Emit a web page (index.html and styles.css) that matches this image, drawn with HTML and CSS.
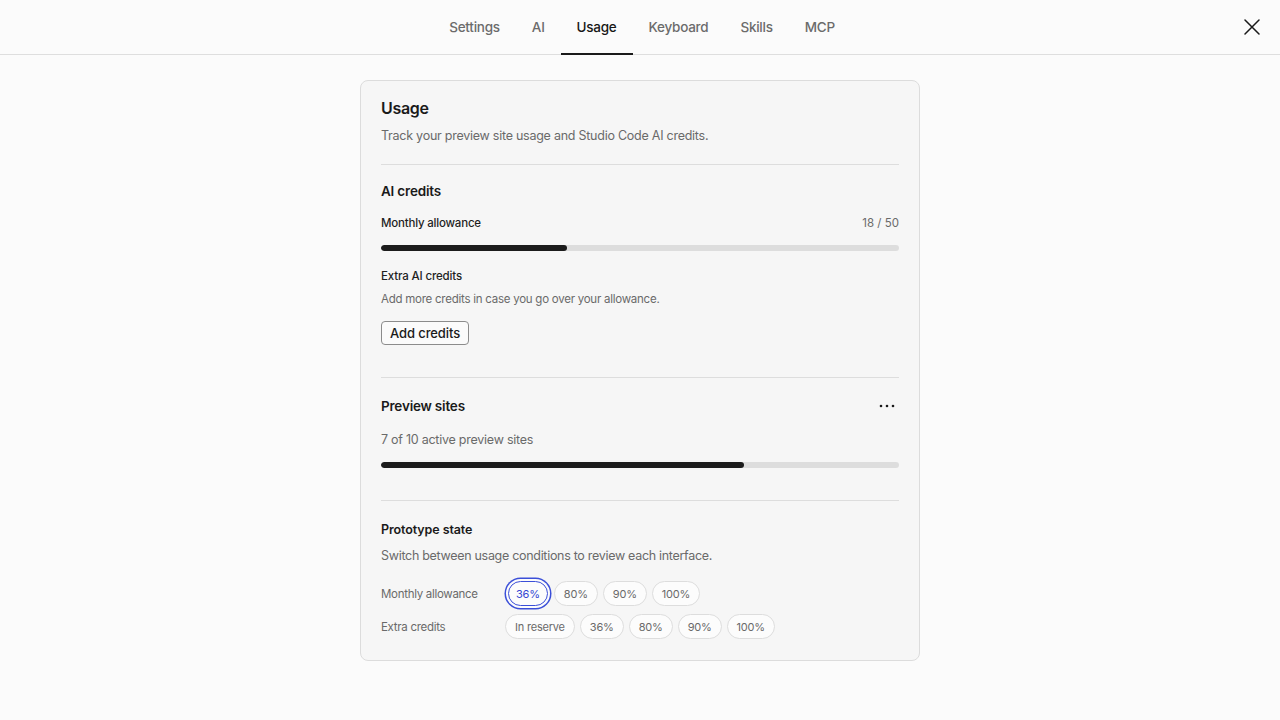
FILE: index.html
```html
<!DOCTYPE html>
<html lang="en">
<head>
<meta charset="utf-8">
<title>Usage</title>
<link rel="stylesheet" href="styles.css">
</head>
<body>
  <header class="topbar">
    <nav class="tabs">
      <a class="tab">Settings</a>
      <a class="tab">AI</a>
      <a class="tab is-active">Usage</a>
      <a class="tab">Keyboard</a>
      <a class="tab">Skills</a>
      <a class="tab">MCP</a>
    </nav>
    <button class="close" aria-label="Close">
      <svg width="16" height="16" viewBox="0 0 16 16"><path d="M1 1L15 15M15 1L1 15" stroke="#1a1a1a" stroke-width="1.5" stroke-linecap="round" fill="none"/></svg>
    </button>
  </header>

  <main class="content">
    <section class="card">
      <div class="card-head">
        <h1 class="card-title">Usage</h1>
        <p class="card-sub">Track your preview site usage and Studio Code AI credits.</p>
      </div>

      <div class="section">
        <h2 class="section-title">AI credits</h2>
        <div class="meter-head">
          <span class="meter-label">Monthly allowance</span>
          <span class="meter-value">18 / 50</span>
        </div>
        <div class="bar"><div class="bar-fill" style="width:36%"></div></div>
        <h3 class="sub-title">Extra AI credits</h3>
        <p class="sub-desc">Add more credits in case you go over your allowance.</p>
        <button class="btn">Add credits</button>
      </div>

      <div class="section">
        <div class="section-head">
          <h2 class="section-title">Preview sites</h2>
          <button class="more" aria-label="More">
            <svg width="16" height="4" viewBox="0 0 16 4"><circle cx="2" cy="2" r="1.3" fill="#1a1a1a"/><circle cx="8" cy="2" r="1.3" fill="#1a1a1a"/><circle cx="14" cy="2" r="1.3" fill="#1a1a1a"/></svg>
          </button>
        </div>
        <p class="count">7 of 10 active preview sites</p>
        <div class="bar"><div class="bar-fill" style="width:70%"></div></div>
      </div>

      <div class="section section-last">
        <h2 class="proto-title">Prototype state</h2>
        <p class="proto-desc">Switch between usage conditions to review each interface.</p>
        <div class="opt-rows">
          <div class="opt-row">
            <span class="opt-label">Monthly allowance</span>
            <div class="chips">
              <button class="chip is-selected">36%</button>
              <button class="chip">80%</button>
              <button class="chip">90%</button>
              <button class="chip">100%</button>
            </div>
          </div>
          <div class="opt-row">
            <span class="opt-label">Extra credits</span>
            <div class="chips">
              <button class="chip">In reserve</button>
              <button class="chip">36%</button>
              <button class="chip">80%</button>
              <button class="chip">90%</button>
              <button class="chip">100%</button>
            </div>
          </div>
        </div>
      </div>
    </section>
  </main>
</body>
</html>
```

FILE: styles.css
```css
* { box-sizing: border-box; }

html, body {
  margin: 0;
  padding: 0;
}

body {
  background: #fbfbfb;
  color: #1a1a1a;
  font-family: Inter, "Noto Sans", "Liberation Sans", sans-serif;
  -webkit-font-smoothing: antialiased;
}

h1, h2, h3, p { margin: 0; }

button {
  font-family: inherit;
  cursor: pointer;
}

/* Top navigation */
.topbar {
  position: relative;
  height: 55px;
  border-bottom: 1px solid #dedede;
  display: flex;
  justify-content: center;
}

.tabs {
  display: flex;
  height: 100%;
  margin-left: 4px;
}

.tab {
  display: flex;
  align-items: center;
  padding: 0 16px;
  font-size: 13.5px;
  font-weight: 500;
  color: #6b6b6b;
  border-bottom: 2px solid transparent;
  margin-bottom: -1px;
  letter-spacing: -0.25px;
}

.tab.is-active {
  color: #161616;
  border-bottom-color: #1a1a1a;
}

.close {
  position: absolute;
  right: 20px;
  top: 19px;
  width: 16px;
  height: 16px;
  padding: 0;
  border: 0;
  background: none;
  display: flex;
}

/* Page body */
.content {
  display: flex;
  justify-content: center;
  padding-top: 25px;
}

.card {
  width: 560px;
  background: #f6f6f6;
  border: 1px solid #dcdcdc;
  border-radius: 8px;
  padding: 17px 20px 21px;
}

.card-head {
  padding-bottom: 19px;
  border-bottom: 1px solid #dddddd;
}

.card-title {
  font-size: 16px;
  line-height: 20px;
  font-weight: 600;
  letter-spacing: -0.3px;
}

.card-sub {
  margin-top: 9px;
  font-size: 12.5px;
  line-height: 18px;
  color: #6a6a6a;
  letter-spacing: -0.25px;
}

.section {
  padding: 17px 0 32px;
  border-bottom: 1px solid #dddddd;
}

.section-last {
  border-bottom: 0;
  padding-bottom: 0;
  padding-top: 20px;
}

.section-title {
  font-size: 13.5px;
  line-height: 18px;
  font-weight: 600;
  letter-spacing: -0.2px;
}

.section-head {
  display: flex;
  justify-content: space-between;
  align-items: center;
  padding-top: 2px;
}

.more {
  border: 0;
  background: none;
  padding: 0;
  margin-right: 4px;
  display: flex;
}

.meter-head {
  margin-top: 15px;
  display: flex;
  justify-content: space-between;
  font-size: 11.5px;
  line-height: 16px;
}

.meter-label {
  font-weight: 500;
  color: #1f1f1f;
  letter-spacing: -0.2px;
}

.meter-value {
  color: #6a6a6a;
}

.bar {
  margin-top: 14px;
  height: 6px;
  border-radius: 3px;
  background: #dddddd;
  overflow: hidden;
}

.bar-fill {
  height: 100%;
  background: #1c1c1c;
  border-radius: 3px;
}

.sub-title {
  margin-top: 17px;
  font-size: 11.5px;
  line-height: 16px;
  font-weight: 500;
  color: #1f1f1f;
  letter-spacing: -0.15px;
}

.sub-desc {
  margin-top: 7px;
  font-size: 11.5px;
  line-height: 16px;
  color: #6a6a6a;
  letter-spacing: -0.25px;
}

.btn {
  margin-top: 14px;
  height: 24px;
  padding: 0 8px;
  border: 1px solid #8c8c8c;
  border-radius: 4px;
  background: #fbfbfb;
  font-size: 13px;
  font-weight: 500;
  color: #1a1a1a;
  letter-spacing: -0.1px;
}

.count {
  margin-top: 16px;
  font-size: 12.5px;
  line-height: 18px;
  color: #6a6a6a;
  letter-spacing: -0.25px;
}

.count + .bar { margin-top: 13px; }

.proto-title {
  font-size: 12.5px;
  line-height: 18px;
  font-weight: 600;
  letter-spacing: -0.1px;
}

.proto-desc {
  margin-top: 8px;
  font-size: 12.5px;
  line-height: 18px;
  color: #6a6a6a;
  letter-spacing: -0.3px;
}

.opt-rows {
  margin-top: 16px;
  display: flex;
  flex-direction: column;
  gap: 8px;
}

.opt-row {
  display: flex;
  align-items: center;
}

.opt-label {
  width: 124px;
  font-size: 11.5px;
  color: #6a6a6a;
  letter-spacing: -0.3px;
}

.chips {
  display: flex;
  gap: 5px;
}

.chip {
  height: 25px;
  padding: 0 9px;
  border: 1px solid #dddddd;
  border-radius: 999px;
  background: #fcfcfc;
  font-size: 11px;
  color: #6a6a6a;
  letter-spacing: -0.2px;
}

/* Active option: blue border plus a focus ring with a light gap */
.chip.is-selected {
  padding: 0 7px;
  color: #3447d3;
  border-color: #3b4fd8;
  box-shadow: 0 0 0 2px #fcfcfc, 0 0 0 3.5px #3b4fd8;
  margin: 0 1px 0 3px;
}
```
